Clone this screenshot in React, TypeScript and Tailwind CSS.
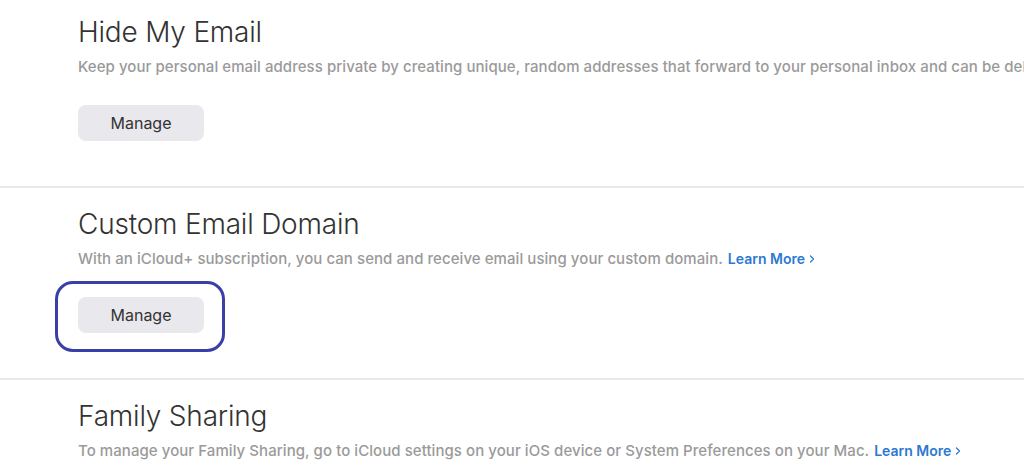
import { ChevronRight } from 'lucide-react';

interface SectionProps {
  title: string;
  text: string;
  link?: boolean;
  button?: boolean;
  outlined?: boolean;
  first?: boolean;
}

function Section({ title, text, link, button, outlined, first }: SectionProps) {
  return (
    <section
      className={`px-[78px] border-b-2 border-[#e8e8e8] pb-[45px] ${first ? 'pt-[14px]' : 'pt-[18px]'}`}
    >
      <h2 className="text-[28px] leading-[36px] font-light text-[#333] tracking-[-0.2px] whitespace-nowrap">
        {title}
      </h2>
      <p className="mt-[7px] text-[15px] leading-[20px] font-medium text-[#9a9a9a] tracking-[0.06px] whitespace-nowrap">
        {text}
        {link && (
          <span className="ml-[5px] text-[14px] text-[#2c79d1] font-semibold tracking-normal inline-flex items-center">
            Learn More
            <ChevronRight className="w-[12px] h-[12px] ml-[1px]" strokeWidth={2.5} />
          </span>
        )}
      </p>
      {button && (
        <div className="relative mt-[28px] w-[126px]">
          <button className="w-[126px] h-[36px] rounded-lg bg-[#e8e8ed] text-[16px] text-[#333]">
            Manage
          </button>
          {outlined && (
            <div className="absolute -left-[23px] -right-[21px] -top-[16px] -bottom-[19px] border-[3px] border-[#3a3fa8] rounded-[18px]" />
          )}
        </div>
      )}
    </section>
  );
}

export default function App() {
  return (
    <div className="w-[1024px] h-[475px] overflow-hidden bg-white" style={{ fontFamily: 'Inter, "Noto Sans", sans-serif' }}>
      <Section
        first
        title="Hide My Email"
        text="Keep your personal email address private by creating unique, random addresses that forward to your personal inbox and can be deleted at any time."
        button
      />
      <Section
        title="Custom Email Domain"
        text="With an iCloud+ subscription, you can send and receive email using your custom domain."
        link
        button
        outlined
      />
      <Section
        title="Family Sharing"
        text="To manage your Family Sharing, go to iCloud settings on your iOS device or System Preferences on your Mac."
        link
      />
    </div>
  );
}
